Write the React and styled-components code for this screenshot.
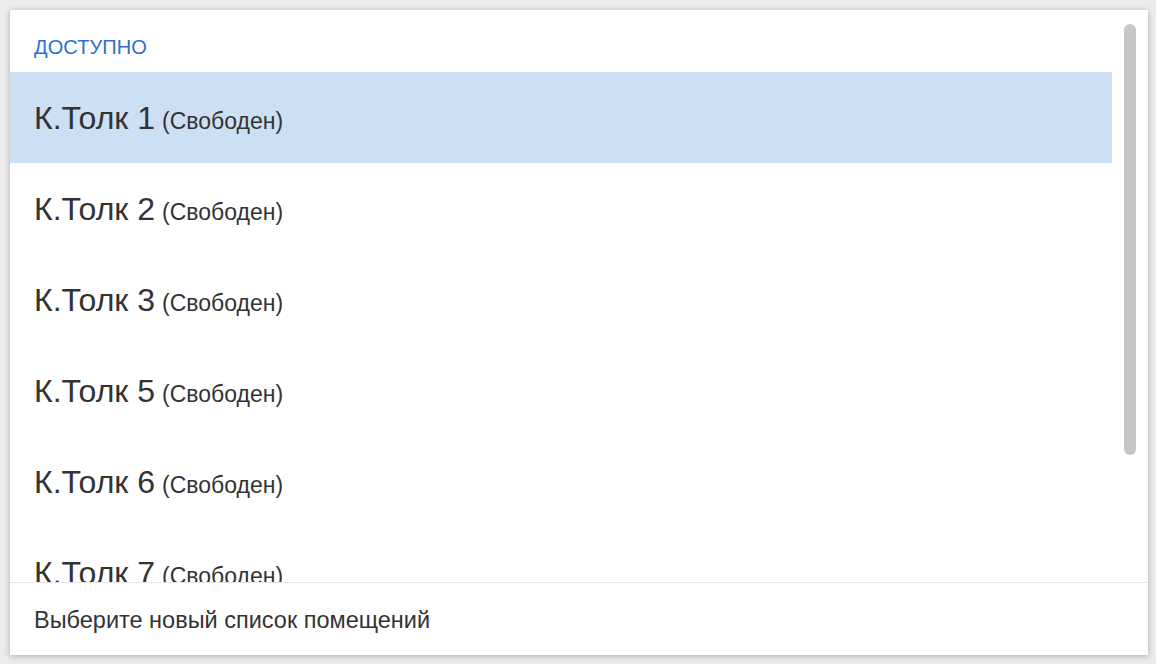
import React from "react";
import styled, { createGlobalStyle } from "styled-components";

const Global = createGlobalStyle`
  html, body { margin: 0; padding: 0; }
  body {
    background: #ececec;
    font-family: "Liberation Sans", Arial, sans-serif;
    width: 1156px;
    height: 664px;
    overflow: hidden;
  }
`;

const Stage = styled.div`
  padding: 10px 8px 9px 10px;
  box-sizing: border-box;
  width: 1156px;
  height: 664px;
`;

const Panel = styled.div`
  width: 1138px;
  height: 645px;
  background: #fff;
  box-shadow: 0 1px 6px rgba(0, 0, 0, 0.28);
  display: flex;
  flex-direction: column;
`;

const ScrollArea = styled.div`
  flex: 1;
  min-height: 0;
  display: flex;
  overflow: hidden;
`;

const List = styled.div`
  flex: 1;
  min-width: 0;
  display: flex;
  flex-direction: column;
`;

const GroupTitle = styled.div`
  height: 62px;
  flex: none;
  display: flex;
  align-items: center;
  padding-left: 24px;
  padding-top: 12px;
  box-sizing: border-box;
  color: #2c6fcf;
  font-size: 20px;
  letter-spacing: 0.1px;
`;

const Row = styled.div`
  height: 91px;
  flex: none;
  display: flex;
  align-items: center;
  padding-left: 24px;
  background: ${(p) => (p.$selected ? "#cddff2" : "transparent")};
`;

const Label = styled.span`
  display: flex;
  align-items: baseline;
  gap: 7px;
  color: #333;
  padding-top: 2px;
`;

const Name = styled.span`
  font-size: 32px;
`;

const Status = styled.span`
  font-size: 23px;
`;

const Track = styled.div`
  width: 36px;
  flex: none;
  display: flex;
  justify-content: center;
  padding-top: 14px;
`;

const Thumb = styled.div`
  width: 12px;
  height: 431px;
  border-radius: 6px;
  background: #c6c6c6;
`;

const Footer = styled.div`
  height: 73px;
  flex: none;
  border-top: 1px solid #e6e6e6;
  box-sizing: border-box;
  display: flex;
  align-items: center;
  padding-left: 24px;
  padding-top: 2px;
  color: #333;
  font-size: 23.5px;
`;

const rooms = [
  { name: "К.Толк 1", status: "(Свободен)", selected: true },
  { name: "К.Толк 2", status: "(Свободен)" },
  { name: "К.Толк 3", status: "(Свободен)" },
  { name: "К.Толк 5", status: "(Свободен)" },
  { name: "К.Толк 6", status: "(Свободен)" },
  { name: "К.Толк 7", status: "(Свободен)" },
];

export default function App() {
  return (
    <>
      <Global />
      <Stage>
        <Panel>
          <ScrollArea>
            <List>
              <GroupTitle>ДОСТУПНО</GroupTitle>
              {rooms.map((r) => (
                <Row key={r.name} $selected={r.selected}>
                  <Label>
                    <Name>{r.name}</Name>
                    <Status>{r.status}</Status>
                  </Label>
                </Row>
              ))}
            </List>
            <Track>
              <Thumb />
            </Track>
          </ScrollArea>
          <Footer>Выберите новый список помещений</Footer>
        </Panel>
      </Stage>
    </>
  );
}
